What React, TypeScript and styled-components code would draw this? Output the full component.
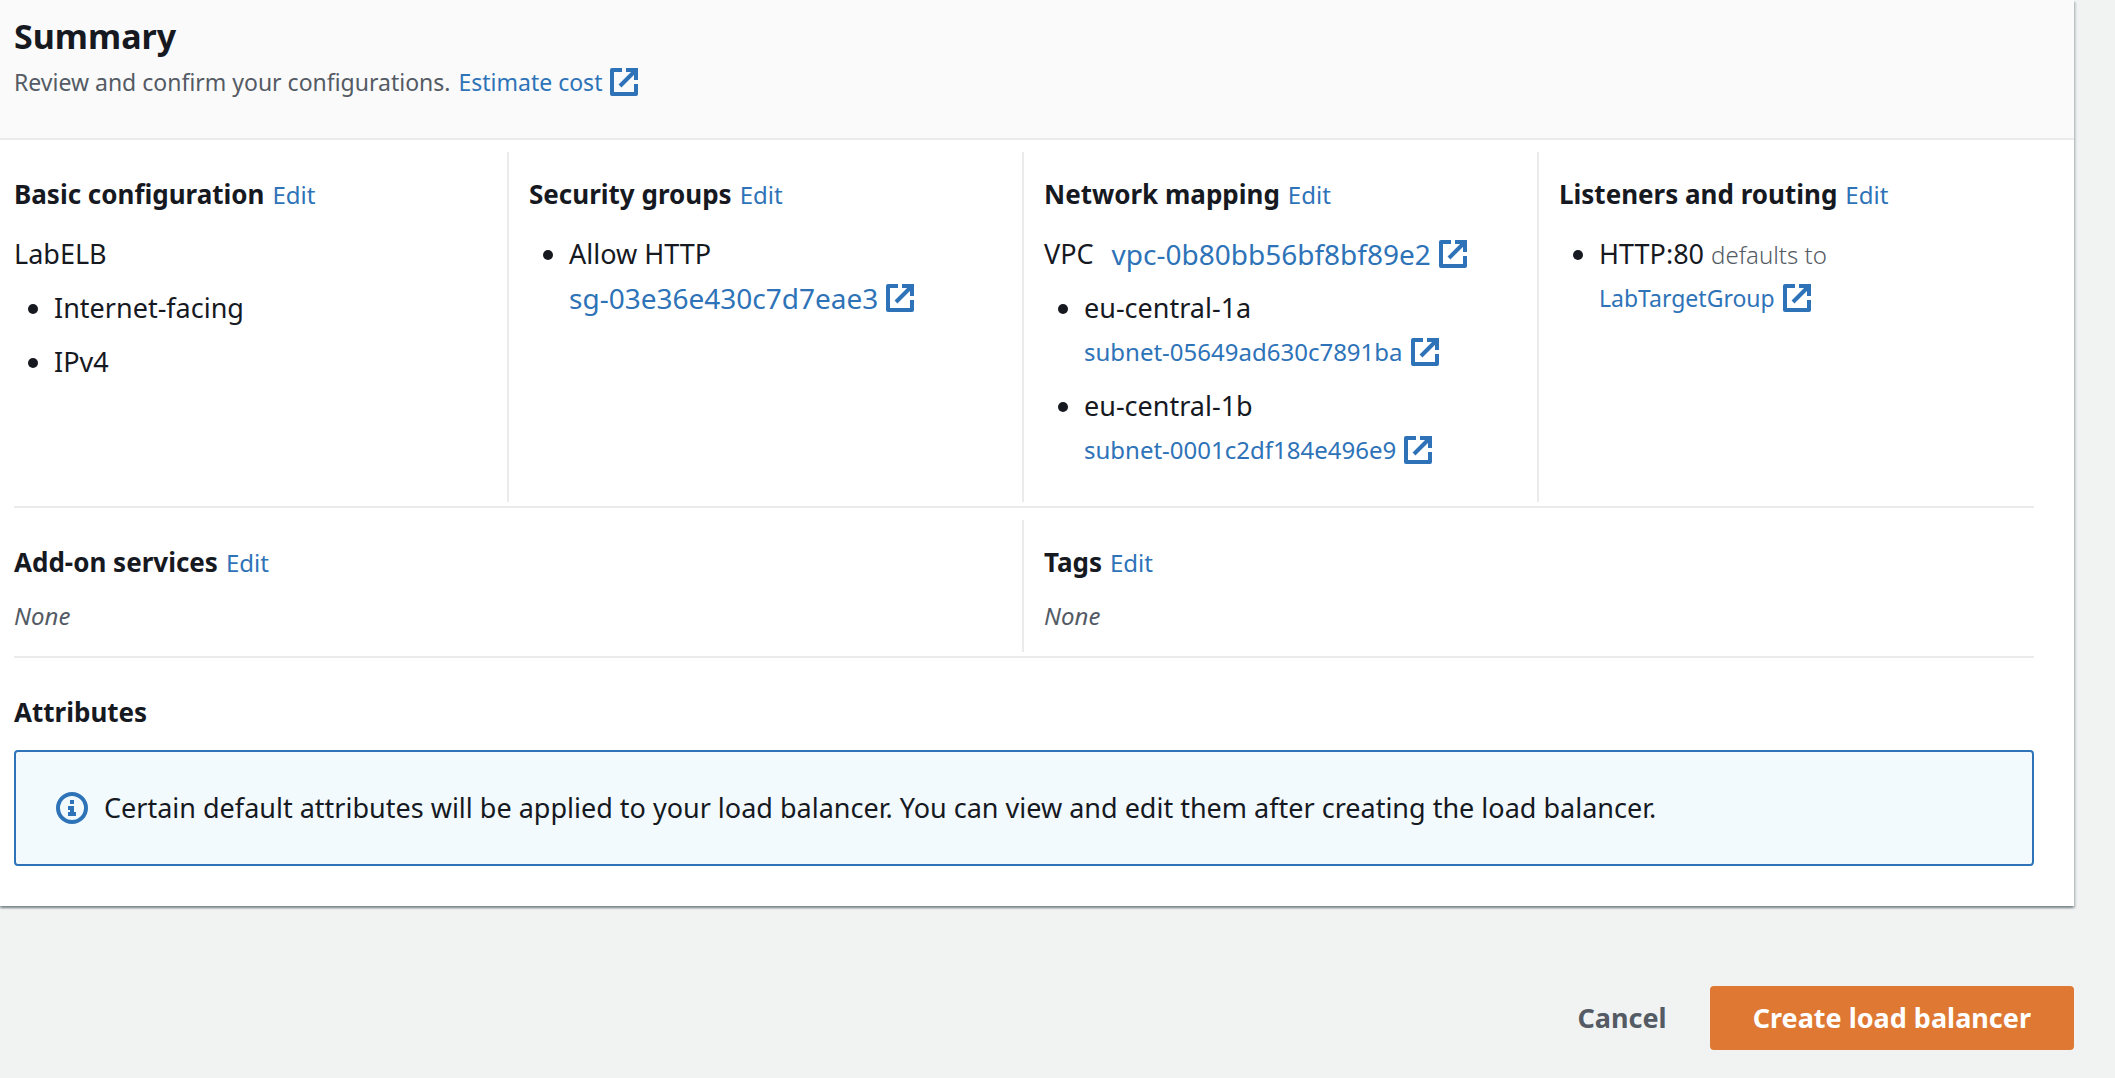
import React from 'react';
import styled, { createGlobalStyle, css } from 'styled-components';

const color = {
  text: '#16191f',
  secondary: '#545b64',
  link: '#2e73b8',
  divider: '#ebebeb',
  page: '#f1f3f3',
  header: '#fafafa',
  info: '#f2fafd',
  primary: '#de7832',
};

const GlobalStyle = createGlobalStyle`
  *, *::before, *::after { box-sizing: border-box; }
  body {
    margin: 0;
    background: ${color.page};
    color: ${color.text};
    font-family: "Noto Sans", "Open Sans", sans-serif;
    font-size: 27px;
    line-height: 44px;
  }
`;

const Page = styled.main`
  padding-right: 41px;
`;

const Panel = styled.section`
  background: #fff;
  box-shadow:
    0 2px 2px 0 rgba(0, 28, 36, 0.3),
    2px 2px 2px 0 rgba(0, 28, 36, 0.15),
    -2px 2px 2px 0 rgba(0, 28, 36, 0.15);
`;

const PanelHeader = styled.header`
  padding: 14px 14px 38px;
  background: ${color.header};
  border-bottom: 2px solid ${color.divider};
`;

const Title = styled.h2`
  margin: 0 0 6px;
  font-size: 34px;
  font-weight: 700;
  line-height: 44px;
`;

const Description = styled.p`
  display: flex;
  align-items: center;
  gap: 8px;
  margin: 0;
  color: ${color.secondary};
  font-size: 23px;
  line-height: 36px;
`;

const PanelBody = styled.div`
  padding: 12px 40px 40px 14px;
  overflow: hidden;
`;

const Columns = styled.div<{ $count: number }>`
  display: grid;
  grid-template-columns: repeat(${(p) => p.$count}, 1fr);
  margin: 0 -20px;
`;

const Column = styled.section`
  padding: 20px;
  & + & {
    box-shadow: -2px 0 0 ${color.divider};
  }
`;

const Divider = styled.hr`
  height: 2px;
  margin: 4px 0 12px;
  border: 0;
  background: ${color.divider};
`;

const HeadingRow = styled.div`
  display: flex;
  align-items: baseline;
  gap: 8px;
  margin-bottom: 16px;
`;

const Heading = styled.h3`
  margin: 0;
  font-size: 26px;
  font-weight: 700;
  line-height: 44px;
`;

const EditLink = styled.a`
  color: ${color.link};
  font-size: 24px;
  line-height: 1;
  text-decoration: none;
`;

const linkSizes = {
  small: css`font-size: 23px; line-height: 36px;`,
  resourceSmall: css`font-size: 24px; line-height: 44px;`,
  resource: css`font-size: 28px; line-height: 44px;`,
  target: css`font-size: 23px; line-height: 44px;`,
};

const ExternalAnchor = styled.a<{ $size: keyof typeof linkSizes }>`
  display: flex;
  align-items: center;
  gap: 6px;
  width: fit-content;
  color: ${color.link};
  text-decoration: none;
  white-space: nowrap;
  ${(p) => linkSizes[p.$size]}
`;

const Icon = styled.svg`
  flex: none;
  width: 32px;
  height: 32px;
`;

const Row = styled.div`
  display: flex;
  align-items: center;
  gap: 18px;
  margin-bottom: 10px;
`;

const List = styled.ul`
  margin: 0;
  padding: 0 0 0 40px;
`;

const Item = styled.li`
  margin-bottom: 10px;
`;

const Muted = styled.span`
  color: ${color.secondary};
  font-size: 24px;
  font-weight: 300;
  line-height: 1;
`;

const Empty = styled.p`
  margin: 0;
  color: ${color.secondary};
  font-size: 24px;
  font-style: italic;
  line-height: 32px;
`;

const Attributes = styled.section`
  padding-top: 20px;
`;

const Alert = styled.div`
  display: flex;
  align-items: center;
  gap: 16px;
  padding: 34px 40px;
  border: 2px solid ${color.link};
  border-radius: 4px;
  background: ${color.info};
`;

const Actions = styled.footer`
  display: flex;
  justify-content: flex-end;
  padding: 80px 0 28px;
`;

const Button = styled.button<{ $primary?: boolean }>`
  height: 64px;
  padding: 0 43px;
  border: 0;
  border-radius: 4px;
  background: ${(p) => (p.$primary ? color.primary : 'transparent')};
  color: ${(p) => (p.$primary ? '#fff' : color.secondary)};
  font: inherit;
  font-weight: 700;
  cursor: pointer;
`;

function ExternalLink({ children, size }: { children: string; size: keyof typeof linkSizes }) {
  return (
    <ExternalAnchor href="#" $size={size}>
      {children}
      <Icon viewBox="0 0 16 16" fill="none" stroke="currentColor" strokeWidth="2" strokeLinejoin="round" aria-hidden="true">
        <path d="M14 9v5H2V2h5" />
        <path d="M9 2h5v5" strokeLinejoin="miter" />
        <path d="M6 10l7.5-7.5" />
      </Icon>
    </ExternalAnchor>
  );
}

function SectionHeading({ children, editable = true }: { children: string; editable?: boolean }) {
  return (
    <HeadingRow>
      <Heading>{children}</Heading>
      {editable && <EditLink href="#">Edit</EditLink>}
    </HeadingRow>
  );
}

export default function App() {
  return (
    <>
      <GlobalStyle />
      <Page>
        <Panel>
          <PanelHeader>
            <Title>Summary</Title>
            <Description>
              Review and confirm your configurations.
              <ExternalLink size="small">Estimate cost</ExternalLink>
            </Description>
          </PanelHeader>
          <PanelBody>
            <Columns $count={4}>
              <Column>
                <SectionHeading>Basic configuration</SectionHeading>
                <Row>LabELB</Row>
                <List>
                  <Item>Internet-facing</Item>
                  <Item>IPv4</Item>
                </List>
              </Column>
              <Column>
                <SectionHeading>Security groups</SectionHeading>
                <List>
                  <Item>
                    Allow HTTP
                    <ExternalLink size="resource">sg-03e36e430c7d7eae3</ExternalLink>
                  </Item>
                </List>
              </Column>
              <Column>
                <SectionHeading>Network mapping</SectionHeading>
                <Row>
                  VPC
                  <ExternalLink size="resource">vpc-0b80bb56bf8bf89e2</ExternalLink>
                </Row>
                <List>
                  <Item>
                    eu-central-1a
                    <ExternalLink size="resourceSmall">subnet-05649ad630c7891ba</ExternalLink>
                  </Item>
                  <Item>
                    eu-central-1b
                    <ExternalLink size="resourceSmall">subnet-0001c2df184e496e9</ExternalLink>
                  </Item>
                </List>
              </Column>
              <Column>
                <SectionHeading>Listeners and routing</SectionHeading>
                <List>
                  <Item>
                    HTTP:80 <Muted>defaults to</Muted>
                    <ExternalLink size="target">LabTargetGroup</ExternalLink>
                  </Item>
                </List>
              </Column>
            </Columns>
            <Divider />
            <Columns $count={2}>
              <Column>
                <SectionHeading>Add-on services</SectionHeading>
                <Empty>None</Empty>
              </Column>
              <Column>
                <SectionHeading>Tags</SectionHeading>
                <Empty>None</Empty>
              </Column>
            </Columns>
            <Divider />
            <Attributes>
              <SectionHeading editable={false}>Attributes</SectionHeading>
              <Alert role="status">
                <Icon viewBox="0 0 16 16" aria-hidden="true">
                  <circle cx="8" cy="8" r="7" fill="none" stroke={color.link} strokeWidth="2" />
                  <path d="M7 4h2v2H7zM6 7h3v3h1v2H6v-2h1V9H6z" fill={color.link} />
                </Icon>
                <span>
                  Certain default attributes will be applied to your load balancer. You can view and edit them after
                  creating the load balancer.
                </span>
              </Alert>
            </Attributes>
          </PanelBody>
        </Panel>
        <Actions>
          <Button type="button">Cancel</Button>
          <Button type="button" $primary>
            Create load balancer
          </Button>
        </Actions>
      </Page>
    </>
  );
}
